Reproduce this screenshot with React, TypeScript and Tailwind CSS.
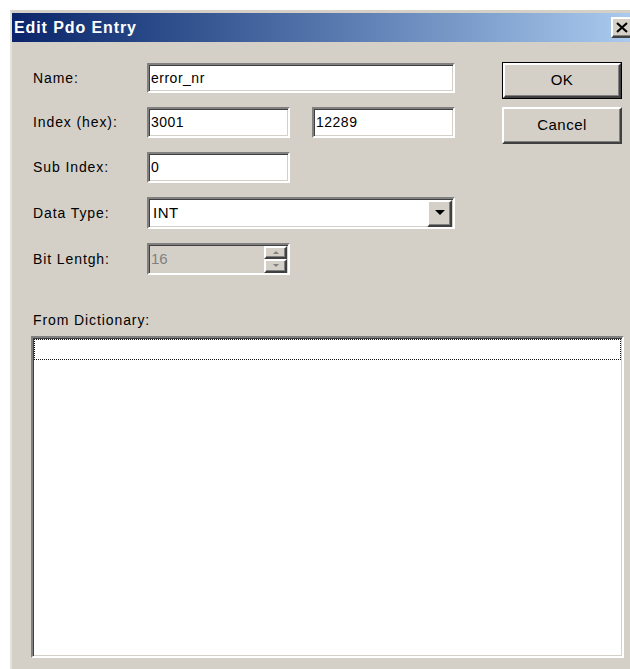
import React from "react"

const font = { fontFamily: '"Liberation Sans", Arial, sans-serif' }

// classic 3D edges
const sunken =
  "border-2 border-t-[#808080] border-l-[#808080] border-b-white border-r-white shadow-[inset_1px_1px_0_#404040,inset_-1px_-1px_0_#d4d0c8]"
const raised =
  "border-2 border-t-white border-l-white border-b-[#404040] border-r-[#404040] shadow-[inset_-1px_-1px_0_#808080]"

const Label = ({ children }: { children: React.ReactNode }) => (
  <span className="w-[114px] shrink-0 text-[14px] tracking-[0.9px] text-black">{children}</span>
)

const TextBox = ({ value, width }: { value: string; width: string }) => (
  <div className={`${sunken} ${width} h-full bg-white flex items-center pl-[2px] text-[14px] tracking-[0.5px] text-black`}>
    {value}
  </div>
)

const ArrowDown = ({ size = 10 }: { size?: number }) => (
  <svg width={size} height={size / 2 + 1} viewBox="0 0 10 6">
    <path d="M0 0h10L5 5z" fill="#000" />
  </svg>
)

const DialogButton = ({ label, isDefault }: { label: string; isDefault?: boolean }) => (
  <div className={`w-[120px] h-[37px] ${isDefault ? "border border-black" : ""}`}>
    <div className={`${raised} h-full bg-[#d4d0c8] flex items-center justify-center text-[15px] tracking-[0.5px] text-black`}>
      {label}
    </div>
  </div>
)

export default function App() {
  return (
    <div className="w-[630px] h-[669px] overflow-hidden bg-white pt-[10px] pl-[10px]" style={font}>
      <div className="w-[640px] h-[700px] bg-[#d4d0c8] border-t-[3px] border-l-[2px] border-t-[#d4d0c8] border-l-[#e4e2dc] flex flex-col">
        {/* title bar */}
        <div className="h-[29px] shrink-0 flex items-center justify-between pl-[2px] pr-[13px] bg-gradient-to-r from-[#0a246a] to-[#b0d0f2]">
          <span className="text-white font-bold text-[16px] tracking-[0.9px]">Edit Pdo Entry</span>
          <div className={`${raised} w-[26px] h-[21px] bg-[#d4d0c8] flex items-center justify-start pl-[3px]`}>
            <svg width="12" height="11" viewBox="0 0 12 11">
              <path d="M1 1l10 9M11 1L1 10" stroke="#000" strokeWidth="2.2" />
            </svg>
          </div>
        </div>

        {/* body */}
        <div className="flex flex-col pl-[19px] pt-[21px]">
          <div className="flex">
            <div className="flex flex-col gap-[14px] pl-[2px] w-[471px]">
              <div className="flex items-center h-[30px]">
                <Label>Name:</Label>
                <TextBox value="error_nr" width="w-[308px]" />
              </div>
              <div className="flex items-center h-[31px]">
                <Label>Index (hex):</Label>
                <TextBox value="3001" width="w-[143px]" />
                <div className="w-[22px]" />
                <TextBox value="12289" width="w-[143px]" />
              </div>
              <div className="flex items-center h-[31px]">
                <Label>Sub Index:</Label>
                <TextBox value="0" width="w-[143px]" />
              </div>
              <div className="flex items-center h-[32px]">
                <Label>Data Type:</Label>
                <div className={`${sunken} w-[308px] h-full bg-white flex items-center justify-between pl-[4px] pr-[1px] text-[15px] tracking-[0.5px] text-black`}>
                  INT
                  <div className={`${raised} w-[25px] h-[27px] bg-[#d4d0c8] flex items-center justify-center`}>
                    <ArrowDown size={10} />
                  </div>
                </div>
              </div>
              <div className="flex items-center h-[32px]">
                <Label>Bit Lentgh:</Label>
                <div className={`${sunken} w-[143px] h-full bg-[#d4d0c8] flex items-center justify-between pl-[2px] pr-[1px] text-[15px] text-[#808080]`}>
                  16
                  <div className="flex flex-col w-[23px] h-[27px]">
                    <div className={`${raised} flex-1 bg-[#d4d0c8] flex items-center justify-center`}>
                      <svg width="6" height="3" viewBox="0 0 6 3"><path d="M0 3h6L3 0z" fill="#808080" /></svg>
                    </div>
                    <div className={`${raised} flex-1 bg-[#d4d0c8] flex items-center justify-center`}>
                      <svg width="6" height="3" viewBox="0 0 6 3"><path d="M0 0h6L3 3z" fill="#808080" /></svg>
                    </div>
                  </div>
                </div>
              </div>
            </div>

            <div className="flex flex-col gap-[8px] -mt-[1px]">
              <DialogButton label="OK" isDefault />
              <DialogButton label="Cancel" />
            </div>
          </div>

          <span className="mt-[37px] pl-[2px] text-[14px] tracking-[0.9px] text-black leading-[16px]">From Dictionary:</span>

          <div className={`${sunken} mt-[8px] w-[593px] h-[322px] bg-white p-[1px]`}>
            <div className="h-[21px] border border-dotted border-[#101010]" />
          </div>
        </div>
      </div>
    </div>
  )
}
